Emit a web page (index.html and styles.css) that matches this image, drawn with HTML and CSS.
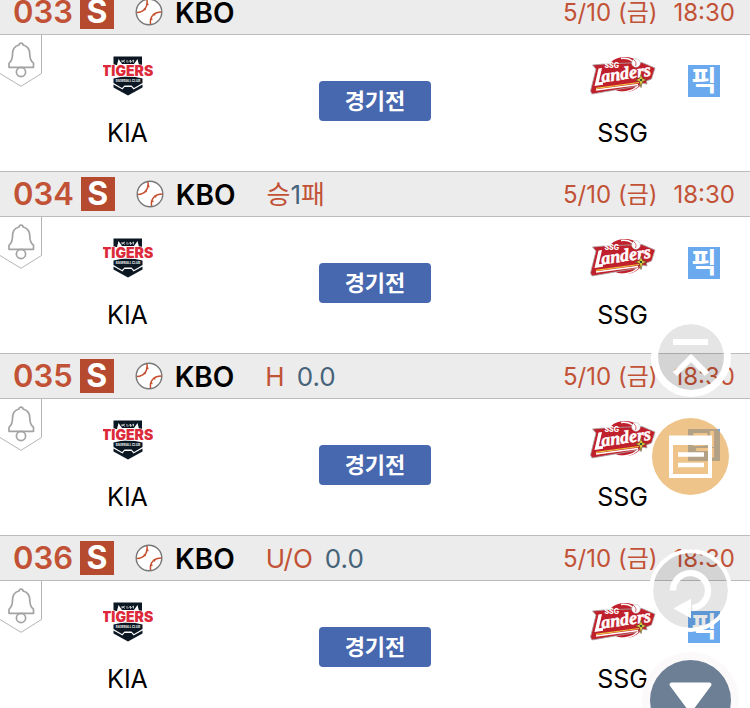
FILE: index.html
```html
<!DOCTYPE html>
<html lang="ko">
<head>
<meta charset="UTF-8" />
<meta name="viewport" content="width=device-width, initial-scale=1" />
<title>KBO</title>
<link rel="stylesheet" href="styles.css">
</head>
<body>

<!-- Shared icons and team logos -->
<svg class="sprite" width="0" height="0" aria-hidden="true">
  <symbol id="icon-ball" viewBox="0 0 28 28">
    <circle cx="14" cy="14" r="12.8" fill="#fff" stroke="#777" stroke-width="1.4"/>
    <g fill="none" stroke="#c4502f" stroke-width="1.5">
      <path d="M12 2c1 7-3 12-10 12.500"/>
      <path d="M26.500 14c-7 0-12 4-11 12"/>
      <path d="M11 6l2.500 .5M9 10.500l1.500 1.500M19 15.500l1 2M15.500 21l2 .5"/>
    </g>
  </symbol>
  <symbol id="icon-bell" viewBox="0 0 43 52">
    <path d="M0 38.500L21 51.300L41.500 38.500V0" fill="none" stroke="#b4b4b4" stroke-width="1"/>
    <g fill="none" stroke="#a3a3a3" stroke-width="1.700" stroke-linejoin="round">
      <path d="M9 32.300v-4c2.500-2 3.500-4.300 3.500-9 0-5 2.500-8.300 6.500-9.300 0-2.500 4-2.500 4 0 4 1 6.800 4.300 6.800 9.300 0 4.700 1 7 3.700 9v4z"/>
      <circle cx="21" cy="37" r="4.600"/>
    </g>
  </symbol>
  <symbol id="logo-kia" viewBox="0 0 50 40">
    <path d="M10.500 .5H39V9H36L34.500 3l-3.500 5H19l-3.500-5L14 9H10.500z" fill="#0b1722"/>
    <path d="M16 1.500h17.500L30.500 7.500H19z" fill="#0b1722"/>
    <path d="M19 6.500V4M19 5.500l3-1.500M20 5l2 1.500M24 6.500V4M25 6.500l2.500-2.500v2.500l3-2.500v2.500" fill="none" stroke="#fff" stroke-width=".7"/>
    <path d="M10.500 22.500Q25 18.500 39.500 22.500V27l-8.500 5-2.500-2.500h-7L19 32l-8.500-5z" fill="#0b1722"/>
    <path d="M10.500 28.500l9 5 2-2.500h7l2 2.500 9-5v3L25 39.500l-14.500-8z" fill="#0b1722"/>
    <text x="24.500" y="19.500" text-anchor="middle" class="kia-word">TIGERS</text>
    <text x="25" y="25.500" text-anchor="middle" class="kia-sub">BASEBALL CLUB</text>
  </symbol>
  <symbol id="logo-ssg" viewBox="0 0 66 40">
    <ellipse cx="35" cy="18.500" rx="20" ry="17.500" fill="#c0202c"/>
    <path d="M2.500 9L14 8l38-1.500L65 12l-3.500 11-5 2 .5 3-5-1-4 3L2 38l-1.500-3L6 13z" fill="#c0202c" stroke="#a9a4a6" stroke-width=".8"/>
    <path d="M31 2.500c4-.5 9 .5 12 3" fill="none" stroke="#fff" stroke-width="1.500"/>
    <path d="M6 34L48 28.500M26 36c8 1 17-1 22-6" fill="none" stroke="#fff" stroke-width="1.300"/>
    <path d="M6 32.300L49 26.500" stroke="#f0c43c" stroke-width="1.200"/>
    <circle cx="46" cy="7" r="4.300" fill="#fff" stroke="#aaa" stroke-width=".5"/>
    <path d="M44 4c2 1.500 2.500 3.500 1.500 6" fill="none" stroke="#c0202c" stroke-width=".7"/>
    <text x="14.500" y="12" class="ssg-small">SSG</text>
    <path d="M8.500 12.500L4.500 30L13 28.700V25.700L8.800 26.300L12 12z" fill="#fff"/>
    <text x="12" y="26.500" transform="rotate(-8 12 26.500)" class="ssg-word">anders</text>
    <path d="M51 18.500l1.500 4 4 1.500-4 1.500-1.500 6-1.500-6-4-1.500 4-1.500z" fill="#f2d544" stroke="#54462a" stroke-width=".6"/>
    <circle cx="51" cy="24" r="1.300" fill="#285b39"/>
  </symbol>
</svg>

<main class="match-list">
  <section class="match">
    <header class="match-head">
      <span class="num">033</span>
      <span class="type">S</span>
      <svg class="ball" aria-hidden="true"><use href="#icon-ball"/></svg>
      <strong class="league">KBO</strong>
      <time class="date"><span>5/10 (금)</span><span>18:30</span></time>
    </header>
    <div class="match-body">
      <button class="alarm" aria-label="알림"><svg><use href="#icon-bell"/></svg></button>
      <div class="team home"><svg class="logo-kia"><use href="#logo-kia"/></svg><span>KIA</span></div>
      <button class="state">경기전</button>
      <div class="team away"><svg class="logo-ssg"><use href="#logo-ssg"/></svg><span>SSG</span></div>
      <button class="pick">픽</button>
    </div>
  </section>

  <section class="match">
    <header class="match-head">
      <span class="num">034</span>
      <span class="type">S</span>
      <svg class="ball" aria-hidden="true"><use href="#icon-ball"/></svg>
      <strong class="league">KBO</strong>
      <span class="option"><span>승<b>1</b>패</span></span>
      <time class="date"><span>5/10 (금)</span><span>18:30</span></time>
    </header>
    <div class="match-body">
      <button class="alarm" aria-label="알림"><svg><use href="#icon-bell"/></svg></button>
      <div class="team home"><svg class="logo-kia"><use href="#logo-kia"/></svg><span>KIA</span></div>
      <button class="state">경기전</button>
      <div class="team away"><svg class="logo-ssg"><use href="#logo-ssg"/></svg><span>SSG</span></div>
      <button class="pick">픽</button>
    </div>
  </section>

  <section class="match">
    <header class="match-head">
      <span class="num">035</span>
      <span class="type">S</span>
      <svg class="ball" aria-hidden="true"><use href="#icon-ball"/></svg>
      <strong class="league">KBO</strong>
      <span class="option"><span>H</span><b>0.0</b></span>
      <time class="date"><span>5/10 (금)</span><span>18:30</span></time>
    </header>
    <div class="match-body">
      <button class="alarm" aria-label="알림"><svg><use href="#icon-bell"/></svg></button>
      <div class="team home"><svg class="logo-kia"><use href="#logo-kia"/></svg><span>KIA</span></div>
      <button class="state">경기전</button>
      <div class="team away"><svg class="logo-ssg"><use href="#logo-ssg"/></svg><span>SSG</span></div>
      <button class="pick">픽</button>
    </div>
  </section>

  <section class="match">
    <header class="match-head">
      <span class="num">036</span>
      <span class="type">S</span>
      <svg class="ball" aria-hidden="true"><use href="#icon-ball"/></svg>
      <strong class="league">KBO</strong>
      <span class="option"><span>U/O</span><b>0.0</b></span>
      <time class="date"><span>5/10 (금)</span><span>18:30</span></time>
    </header>
    <div class="match-body">
      <button class="alarm" aria-label="알림"><svg><use href="#icon-bell"/></svg></button>
      <div class="team home"><svg class="logo-kia"><use href="#logo-kia"/></svg><span>KIA</span></div>
      <button class="state">경기전</button>
      <div class="team away"><svg class="logo-ssg"><use href="#logo-ssg"/></svg><span>SSG</span></div>
      <button class="pick">픽</button>
    </div>
  </section>
</main>

<nav class="floating">
  <button class="fab fab-top" aria-label="맨 위로">
    <svg viewBox="0 0 66 66"><path d="M15 18h35M17 50l16-16 16 16" fill="none" stroke="#fff" stroke-width="6"/></svg>
  </button>
  <button class="fab fab-memo" aria-label="메모">
    <svg viewBox="0 0 77 77">
      <path d="M17 17.500h43V60H17zM21 27v29h35V27z" fill="#fff" fill-rule="evenodd"/>
      <path d="M26 36.500h26M26 47h26" stroke="#fff" stroke-width="4.500"/>
    </svg>
  </button>
  <button class="fab fab-refresh" aria-label="새로고침">
    <svg viewBox="0 0 77 77">
      <path d="M20.500 38.500a18 18 0 1 1 20 18" fill="none" stroke="#fff" stroke-width="6.500"/>
      <path d="M21 57L39 47v20z" fill="#fff"/>
    </svg>
  </button>
  <button class="fab fab-down" aria-label="아래로">
    <svg viewBox="0 0 81 81"><path d="M21.500 24.500h38L40.500 50z" fill="#fff" stroke="#fff" stroke-width="4" stroke-linejoin="round"/></svg>
  </button>
</nav>

</body>
</html>
```

FILE: styles.css
```css
* {
  box-sizing: border-box;
}
body {
  margin: 0;
  background: #fff;
  color: #000;
  font-family: Inter, "Noto Sans CJK KR", sans-serif;
  overflow: hidden;
}
button {
  padding: 0;
  border: none;
  background: none;
  font-family: inherit;
  cursor: pointer;
}
.sprite {
  position: absolute;
}

/* Match rows */
.match-list {
  margin-top: -11px;
}
.match-head {
  display: flex;
  align-items: center;
  height: 46px;
  padding: 0 15px 0 13px;
  background: #ececec;
  border-top: 1px solid #bbb;
  border-bottom: 1px solid #bbb;
  line-height: 36px;
  white-space: nowrap;
}
.num {
  color: #c25236;
  font-size: 31px;
  font-weight: 600;
}
.type {
  width: 34px;
  height: 34px;
  margin-left: 7px;
  background: #b64a2e;
  color: #fff;
  font-size: 32px;
  font-weight: 700;
  line-height: 34px;
  text-align: center;
}
.ball {
  width: 28px;
  height: 28px;
  margin-left: 21px;
}
.league {
  margin-left: 12px;
  padding-top: 2px;
  font-size: 28px;
  font-weight: 600;
}
.option {
  display: flex;
  align-items: baseline;
  gap: 12px;
  margin-left: 31px;
  padding-top: 2px;
  color: #c25236;
  font-size: 26px;
}
.option b {
  color: #46637a;
  font-weight: 400;
}
.date {
  display: flex;
  align-items: baseline;
  gap: 16px;
  margin-left: auto;
  padding-top: 2px;
  color: #c25236;
  font-size: 24px;
}
.match-body {
  display: grid;
  grid-template-columns: 34% 32% 34%;
  grid-template-rows: 136px;
  align-items: start;
}
.alarm {
  grid-area: 1 / 1;
  justify-self: start;
  z-index: 1;
}
.alarm svg {
  display: block;
  width: 43px;
  height: 52px;
}
.team {
  display: flex;
  flex-direction: column;
  align-items: center;
  gap: 21px;
  padding-top: 21px;
  font-size: 25px;
  line-height: 32px;
}
.home {
  grid-area: 1 / 1;
}
.away {
  grid-area: 1 / 3;
}
.logo-kia {
  width: 50px;
  height: 40px;
}
.logo-ssg {
  width: 66px;
  height: 40px;
}
.kia-word {
  fill: #dc2a3a;
  stroke: #fff;
  stroke-width: 1px;
  paint-order: stroke;
  font-size: 14px;
  font-weight: 900;
}
.kia-sub {
  fill: #fff;
  font-size: 3px;
  font-weight: 700;
}
.ssg-small {
  fill: #fff;
  font-size: 7px;
  font-weight: 800;
}
.ssg-word {
  fill: #fff;
  stroke: #fff;
  stroke-width: 0.5px;
  font-family: "Liberation Serif", serif;
  font-size: 18px;
  font-style: italic;
  font-weight: 700;
}
.state {
  grid-area: 1 / 2;
  justify-self: center;
  width: 112px;
  height: 40px;
  margin-top: 46px;
  padding-bottom: 4px;
  border-radius: 4px;
  background: #4768af;
  color: #fff;
  font-size: 22px;
  font-weight: 700;
}
.pick {
  grid-area: 1 / 3;
  justify-self: end;
  width: 32px;
  height: 32px;
  margin: 30px 30px 0 0;
  background: #6aa9ee;
  color: #fff;
  font-size: 28px;
  font-weight: 700;
  line-height: 32px;
}

/* Floating buttons */
.floating {
  position: fixed;
  right: 18px;
  bottom: -33px;
  z-index: 2;
  display: flex;
  flex-direction: column;
  align-items: center;
}
.fab {
  border-radius: 50%;
  background-clip: padding-box;
}
.fab svg {
  display: block;
  width: 100%;
  height: 100%;
}
.fab-top {
  width: 80px;
  height: 80px;
  margin-bottom: 21px;
  border: 7px solid #fff;
  background-color: rgba(0, 0, 0, 0.1);
}
.fab-memo {
  width: 77px;
  height: 77px;
  margin-bottom: 54px;
  background-color: rgba(227, 157, 62, 0.6);
}
.fab-refresh {
  width: 83px;
  height: 83px;
  margin-bottom: 28px;
  border: 4px solid #fff;
  background-color: rgba(0, 0, 0, 0.1);
}
.fab-down {
  width: 81px;
  height: 81px;
  background-color: #6d7f95;
  box-shadow: 0 0 0 8px #fcf9fb;
}
```
